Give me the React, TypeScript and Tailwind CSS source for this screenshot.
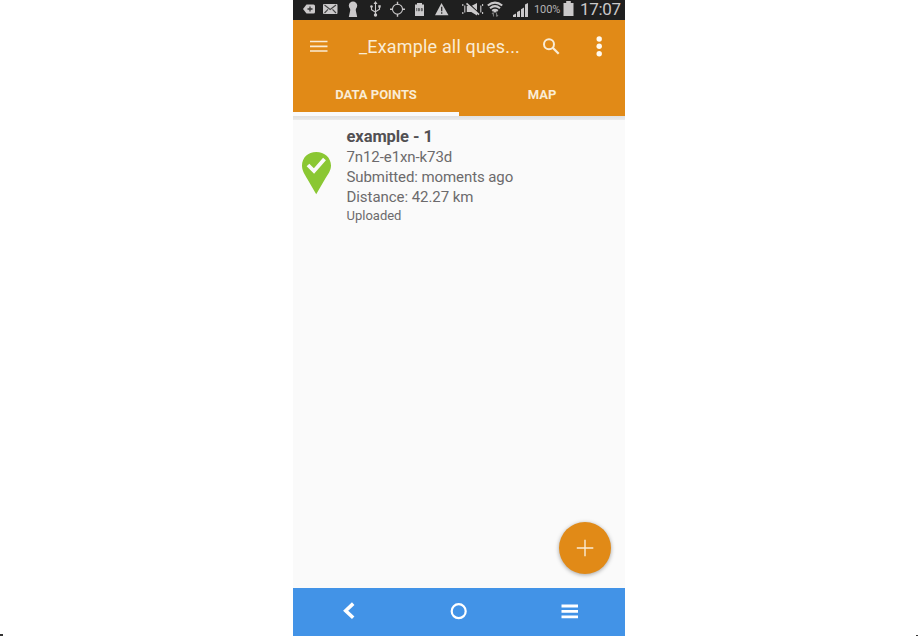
import type { ReactNode } from "react";

type GlyphProps = { box: string; className: string; children: ReactNode };

function Glyph({ box, className, children }: GlyphProps) {
  return (
    <svg viewBox={box} className={`block shrink-0 ${className}`} fill="none" aria-hidden="true">
      {children}
    </svg>
  );
}

function StatusBar() {
  return (
    <div className="flex h-5 items-start bg-[#1f1f1f] pl-[10px] text-[#cbc9ca]">
      <Glyph box="0 0 12 20" className="h-5 w-3">
        <path d="M0 9 3.5 4.5H10.5Q12 4.5 12 6V12Q12 13.5 10.5 13.5H3.5Z" fill="currentColor" />
        <path d="M7 6.5v5M4.5 9h5" stroke="#333" strokeWidth="1.3" />
      </Glyph>
      <Glyph box="0 0 15 20" className="ml-2 h-5 w-[15px]">
        <rect y="4" width="14.5" height="10" rx="1" fill="currentColor" />
        <path d="M1.5 5 7.2 9.5 13 5M1.5 13 5 9.3M13 13 9.5 9.3" stroke="#444" strokeWidth="1.1" />
      </Glyph>
      <Glyph box="0 0 10 20" className="ml-[10px] h-5 w-[10px]">
        <circle cx="5" cy="5.7" r="4.2" fill="currentColor" />
        <path d="M2.2 7.5h5.6v3l1.4 6.5H.8L2.2 10.5Z" fill="currentColor" />
      </Glyph>
      <Glyph box="0 0 11 20" className="ml-3 h-5 w-[11px]">
        <path d="M5.5 3v12M1.5 6.5v3.2l4 2.5M9.5 6.5v2.7l-4 2.5" stroke="currentColor" strokeWidth="1.1" />
        <path d="m5.5 1 2 3h-4Z" fill="currentColor" />
        <circle cx="5.5" cy="15" r="1.7" fill="currentColor" />
        <circle cx="1.5" cy="6.5" r="1.3" fill="currentColor" />
        <path d="M8.3 5.2h2.4v2.4H8.3Z" fill="currentColor" />
      </Glyph>
      <Glyph box="0 0 16 20" className="ml-[9px] h-5 w-4">
        <circle cx="7.5" cy="9.2" r="5" stroke="currentColor" strokeWidth="1.1" />
        <path d="M7.5 1.7v3M7.5 13.7v3M0 9.2h3M12 9.2h3" stroke="currentColor" strokeWidth="1.4" />
      </Glyph>
      <Glyph box="0 0 11 20" className="ml-2 h-5 w-[11px]">
        <path d="M3 3h5v1.5h2V16H1V4.5h2Z" fill="currentColor" />
        <path d="M2.7 8v3.2M4.4 8.5h1v2.3h-1ZM7.3 8.5h1v2.3h-1Z" stroke="#444" strokeWidth=".8" />
      </Glyph>
      <Glyph box="0 0 14 20" className="ml-[10px] h-5 w-[14px]">
        <path d="M6.5 3 13.5 15.2H0Z" fill="currentColor" />
        <path d="M6.7 6.8v4.4M6.7 12.2v1.5" stroke="#2b2b2b" strokeWidth="1.3" />
      </Glyph>
      <Glyph box="0 0 22 20" className="ml-[13px] h-5 w-[22px]">
        <path d="M.8 4v2M.8 12v2M2.8 5.5v7M20.6 4v2M20.6 12v2M18.8 5.5v7" stroke="currentColor" strokeWidth="1.1" />
        <path d="M4.8 6h4.5L15 3v12.5L9.3 12H4.8Z" fill="currentColor" />
        <path d="m6 3 12 11" stroke="#1f1f1f" strokeWidth="1.2" />
        <path d="m4.5 3.3 12.5 11.4" stroke="currentColor" strokeWidth="1.6" />
      </Glyph>
      <Glyph box="0 0 17 20" className="ml-[3px] h-5 w-[17px]">
        <path d="M.8 5.5Q8-.3 15.2 5.5M3 8.3Q8 4.1 13 8.3M5.2 10.9Q8 8.7 10.8 10.9" stroke="currentColor" strokeWidth="2.1" />
        <path d="m8 13-1.7-2h3.4Z" fill="currentColor" />
        <path d="M6.5 16.5v-4M5 14l1.5-1.5M9.5 12.5v4M11 15l-1.5 1.5" stroke="#777" strokeWidth="1.1" />
      </Glyph>
      <Glyph box="0 0 16 20" className="ml-[9px] h-5 w-4">
        <path d="M0 17v-2l3-1.5V17ZM4 17v-5l3-1.5V17ZM8 17V9.2L11 7.5V17ZM12 17V4.5L15 3v14Z" fill="currentColor" />
      </Glyph>
      <span className="ml-[5px] w-[27px] text-[11px] leading-[19px] tracking-[-0.1px] text-[#b5b3b4]">100%</span>
      <Glyph box="0 0 11 20" className="ml-[2px] h-5 w-[11px]">
        <path d="M3.2 1h4.6v2h2.7v13H.5V3h2.7Z" fill="currentColor" />
      </Glyph>
      <span className="ml-[6px] text-[17px] leading-[18px] tracking-[-0.35px]">17:07</span>
    </div>
  );
}

function AppBar() {
  return (
    <header className="h-24 shrink-0 bg-[#e18a17] text-[#faecd5]">
      <div className="flex h-[53px] items-center pl-[17px]">
        <Glyph box="0 0 18 14" className="h-[14px] w-[18px]">
          <path d="M0 1.5h17.5M0 6.3h17.5M0 11h17.5" stroke="currentColor" strokeWidth="1.7" />
        </Glyph>
        <h1 className="ml-[31px] w-[163px] whitespace-nowrap text-[18px] leading-[54px] tracking-[0.17px]">_Example all ques...</h1>
        <Glyph box="0 0 18 18" className="ml-[20px] h-[18px] w-[18px]">
          <circle cx="7" cy="6.2" r="5" stroke="currentColor" strokeWidth="2" />
          <path d="m10.7 9.8 6 6" stroke="currentColor" strokeWidth="2.3" />
        </Glyph>
        <Glyph box="0 0 8 22" className="ml-[35px] h-[22px] w-2">
          <circle cx="4.2" cy="3" r="2.7" fill="#fffaf0" />
          <circle cx="4.2" cy="10.3" r="2.7" fill="#fffaf0" />
          <circle cx="4.2" cy="17.7" r="2.7" fill="#fffaf0" />
        </Glyph>
      </div>
      <nav className="grid h-[43px] grid-cols-2 text-center text-[13px] font-bold">
        <div className="h-[43px] border-b-4 border-[#fafafa] leading-[43px]">
          <span>DATA POINTS</span>
        </div>
        <div className="h-[43px] leading-[43px]">MAP</div>
      </nav>
    </header>
  );
}

function DataPoint() {
  return (
    <article className="flex pl-[8.5px] pt-[6px] text-[15px] leading-5 text-[#6c6a6c]">
      <Glyph box="0 0 30 43" className="mt-[26px] h-[43px] w-[30px]">
        <path d="M14.2 0C6 0 0 5.8 0 13.5c0 5 2.4 8.3 5.2 13.3L14.2 42.3l9-15.5C26.2 21.8 29 18.5 29 13.5 29 5.8 22.5 0 14.2 0Z" fill="#8ac733" />
        <path d="m6 13 6 6L22.5 7" stroke="#fafafa" strokeWidth="3.8" />
      </Glyph>
      <div className="ml-[15px]">
        <h2 className="text-[16.5px] font-bold leading-[21px] tracking-[-0.08px] text-[#525053]">example - 1</h2>
        <p className="tracking-[-0.09px]">7n12-e1xn-k73d</p>
        <p className="tracking-[-0.09px]">Submitted: moments ago</p>
        <p className="tracking-[-0.06px]">Distance: 42.27 km</p>
        <p className="text-[13px] leading-[18px]">Uploaded</p>
      </div>
    </article>
  );
}

function NavigationBar() {
  return (
    <footer className="flex h-12 shrink-0 items-start bg-[#4293e7] pl-[50px] pt-[14px] text-white">
      <Glyph box="0 0 12 18" className="h-[18px] w-3">
        <path d="M10.2 1.6 2.7 8.7l7.5 7.1" stroke="currentColor" strokeWidth="3.6" />
      </Glyph>
      <Glyph box="0 0 18 18" className="ml-[95px] h-[18px] w-[18px]">
        <circle cx="8.7" cy="9.2" r="7" stroke="currentColor" strokeWidth="2.2" />
      </Glyph>
      <Glyph box="0 0 18 18" className="ml-[93px] h-[18px] w-[18px]">
        <path d="M.5 4h16.5M.5 9.4h16.5M.5 14.8h16.5" stroke="currentColor" strokeWidth="2.8" />
      </Glyph>
    </footer>
  );
}

export default function App() {
  return (
    <div className="flex h-[636px] w-[918px] items-end justify-between overflow-hidden bg-white font-[Roboto,sans-serif]">
      <div className="h-[2px] w-[293px]">
        <div className="h-full w-[3px] bg-[#333]" />
      </div>
      <main className="relative flex h-full w-[332px] flex-col bg-[#fafafa]">
        <StatusBar />
        <AppBar />
        <div className="h-1 shrink-0 bg-gradient-to-b from-[#e0e0e0] to-[#ebebeb]" />
        <section className="grow">
          <DataPoint />
        </section>
        <button
          aria-label="Add data point"
          className="absolute bottom-[62.5px] right-[14.5px] flex h-[52px] w-[52px] items-center justify-center rounded-full bg-[#e18a17] text-[#faecd5] shadow-[0_1px_4px_rgba(0,0,0,0.35)]"
        >
          <Glyph box="0 0 18 18" className="h-[18px] w-[18px]">
            <path d="M9 .8v16.5M.8 9h16.5" stroke="currentColor" strokeWidth="1.4" />
          </Glyph>
        </button>
        <NavigationBar />
      </main>
      <div className="flex h-px w-[293px] justify-end">
        <div className="h-full w-[2px] bg-[#333]" />
      </div>
    </div>
  );
}
